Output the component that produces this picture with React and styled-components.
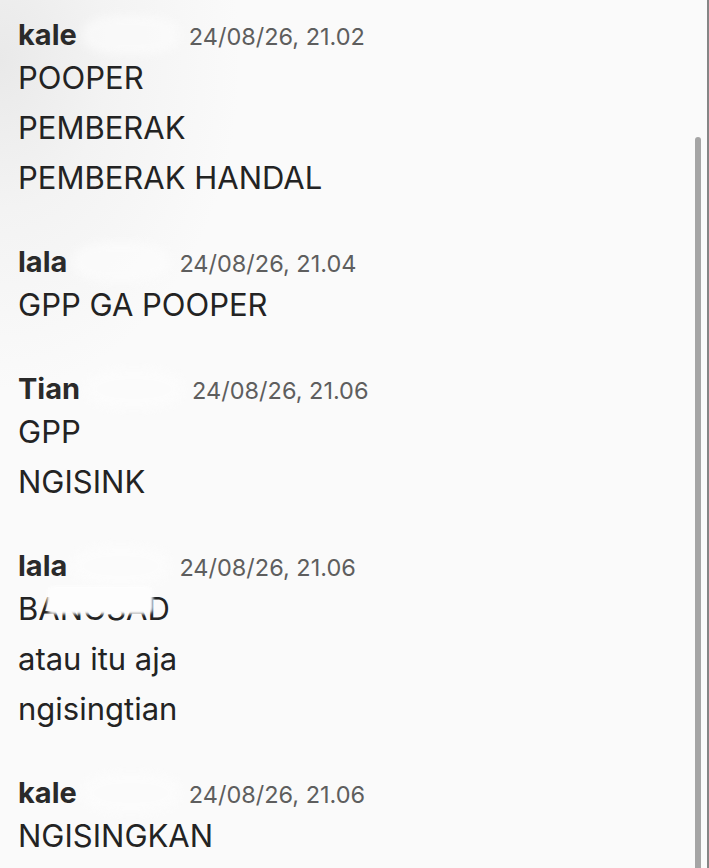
import styled, { createGlobalStyle } from "styled-components";

const GlobalStyle = createGlobalStyle`
  html, body {
    margin: 0;
    padding: 0;
    background: #fafafa;
  }
  body {
    font-family: Inter, "Noto Sans", sans-serif;
  }
`;

const Page = styled.div`
  position: relative;
  min-height: 868px;
  box-sizing: border-box;
  overflow: hidden;
  padding: 17px 0 0 18px;
  border-right: 2px solid #858585;
  background: radial-gradient(
      ellipse 240px 330px at 0 60px,
      #e9e9e9 0%,
      #f3f3f3 45%,
      rgba(250, 250, 250, 0) 100%
    ),
    #fafafa;
`;

const ScrollThumb = styled.div`
  position: absolute;
  top: 137px;
  right: 6px;
  bottom: 0;
  width: 6px;
  border-radius: 3px 3px 0 0;
  background: #a5a5a5;
`;

const Group = styled.section`
  margin-bottom: 41px;
`;

const Header = styled.div`
  display: flex;
  align-items: baseline;
  height: 36px;
  line-height: 36px;
`;

const Name = styled.span`
  font-size: 29px;
  font-weight: 700;
  color: #2a2a2a;
`;

// blurred white blob where the original tag was wiped out
const Smudge = styled.span`
  display: inline-block;
  width: 96px;
  height: 40px;
  margin: 0 10px 0 6px;
  align-self: center;
  border-radius: 40%;
  background: #fdfdfd;
  filter: blur(4px);
  opacity: 0.6;
`;

const Time = styled.span`
  font-size: 23.5px;
  color: #5e5e5e;
`;

const Line = styled.div`
  font-size: 31px;
  line-height: 50px;
  color: #232323;
  white-space: nowrap;
`;

const Wiped = styled.span`
  position: relative;

  &::after {
    content: "";
    position: absolute;
    left: 9px;
    right: -6px;
    top: -4px;
    bottom: 13px;
    background: #fdfdfd;
    border-radius: 6px;
    filter: blur(1.5px);
  }
`;

const messages = [
  { name: "kale", time: "24/08/26, 21.02", lines: ["POOPER", "PEMBERAK", "PEMBERAK HANDAL"] },
  { name: "lala", time: "24/08/26, 21.04", lines: ["GPP GA POOPER"] },
  { name: "Tian", time: "24/08/26, 21.06", lines: ["GPP", "NGISINK"] },
  {
    name: "lala",
    time: "24/08/26, 21.06",
    lines: [
      <>
        B<Wiped>ANGSA</Wiped>D
      </>,
      "atau itu aja",
      "ngisingtian",
    ],
  },
  { name: "kale", time: "24/08/26, 21.06", lines: ["NGISINGKAN"] },
];

const App = () => {
  return (
    <>
      <GlobalStyle />
      <Page>
        {messages.map((m, i) => (
          <Group key={i}>
            <Header>
              <Name>{m.name}</Name>
              <Smudge />
              <Time>{m.time}</Time>
            </Header>
            {m.lines.map((l, j) => (
              <Line key={j}>{l}</Line>
            ))}
          </Group>
        ))}
        <ScrollThumb />
      </Page>
    </>
  );
};

export default App;
